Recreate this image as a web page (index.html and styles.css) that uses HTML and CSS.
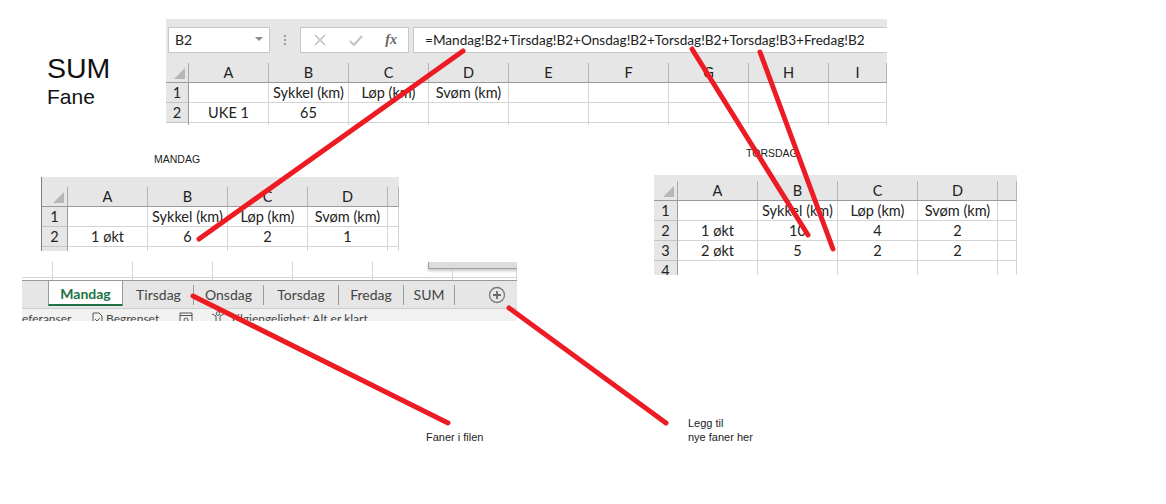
FILE: index.html
```html
<!DOCTYPE html>
<html lang="en">
<head>
    <meta charset="UTF-8">
    <title>SUM Fane</title>
    <link rel="stylesheet" href="styles.css">
</head>
<body>
<div class="canvas">

    <div class="title">SUM<small>Fane</small></div>

    <!-- SUM sheet -->
    <div class="shot shot_sum">
        <div class="formula_bar">
            <div class="name_box">B2<span class="arrow"></span></div>
            <div class="dots"></div>
            <div class="fx_box">
                <svg width="12" height="12" viewBox="0 0 12 12"><path d="M1 1l10 10M11 1L1 11" stroke="#c2c2c2" stroke-width="1.6" fill="none"/></svg>
                <svg width="14" height="12" viewBox="0 0 14 12"><path d="M1 7l4 4 8-9" stroke="#c2c2c2" stroke-width="2" fill="none"/></svg>
                <span class="fx">fx</span>
            </div>
            <div class="formula">=Mandag!B2+Tirsdag!B2+Onsdag!B2+Torsdag!B2+Torsdag!B3+Fredag!B2</div>
        </div>
        <div class="sheet sheet_sum">
            <div class="corner"></div><div class="ch">A</div><div class="ch">B</div><div class="ch">C</div><div class="ch">D</div><div class="ch">E</div><div class="ch">F</div><div class="ch">G</div><div class="ch">H</div><div class="ch">I</div>
            <div class="rh">1</div><div class="c"></div><div class="c">Sykkel (km)</div><div class="c">Løp (km)</div><div class="c">Svøm (km)</div><div class="c"></div><div class="c"></div><div class="c"></div><div class="c"></div><div class="c"></div>
            <div class="rh">2</div><div class="c">UKE 1</div><div class="c">65</div><div class="c"></div><div class="c"></div><div class="c"></div><div class="c"></div><div class="c"></div><div class="c"></div><div class="c"></div>
            <div class="rh end"></div><div class="c end"></div><div class="c end"></div><div class="c end"></div><div class="c end"></div><div class="c end"></div><div class="c end"></div><div class="c end"></div><div class="c end"></div><div class="c end"></div>
        </div>
    </div>

    <div class="label label_mandag">MANDAG</div>

    <!-- Mandag sheet -->
    <div class="shot shot_mandag">
        <div class="sheet sheet_mandag">
            <div class="corner"></div><div class="ch">A</div><div class="ch">B</div><div class="ch">C</div><div class="ch">D</div><div class="ch"></div>
            <div class="rh">1</div><div class="c"></div><div class="c">Sykkel (km)</div><div class="c">Løp (km)</div><div class="c">Svøm (km)</div><div class="c"></div>
            <div class="rh">2</div><div class="c">1 økt</div><div class="c">6</div><div class="c">2</div><div class="c">1</div><div class="c"></div>
            <div class="rh end"></div><div class="c end"></div><div class="c end"></div><div class="c end"></div><div class="c end"></div><div class="c end"></div>
        </div>
    </div>

    <div class="label label_torsdag">TORSDAG</div>

    <!-- Torsdag sheet -->
    <div class="shot shot_torsdag">
        <div class="sheet sheet_torsdag">
            <div class="corner"></div><div class="ch">A</div><div class="ch">B</div><div class="ch">C</div><div class="ch">D</div><div class="ch"></div>
            <div class="rh">1</div><div class="c"></div><div class="c">Sykkel (km)</div><div class="c">Løp (km)</div><div class="c">Svøm (km)</div><div class="c"></div>
            <div class="rh">2</div><div class="c">1 økt</div><div class="c">10</div><div class="c">4</div><div class="c">2</div><div class="c"></div>
            <div class="rh">3</div><div class="c">2 økt</div><div class="c">5</div><div class="c">2</div><div class="c">2</div><div class="c"></div>
            <div class="rh end">4</div><div class="c end"></div><div class="c end"></div><div class="c end"></div><div class="c end"></div><div class="c end"></div>
        </div>
    </div>

    <!-- tabs -->
    <div class="shot shot_tabs">
        <div class="tab_grid">
            <div class="g"></div><div class="g"></div><div class="g"></div><div class="g"></div><div class="g"></div><div class="g"></div><div class="g"></div>
            <div class="g end"></div><div class="g end"></div><div class="g end"></div><div class="g end"></div><div class="g end"></div><div class="g end"></div><div class="g end"></div>
        </div>
        <div class="dialog_edge"></div>
        <div class="tabs">
            <div class="tab active">Mandag</div>
            <div class="tab t_tirsdag">Tirsdag</div>
            <div class="tab t_onsdag">Onsdag</div>
            <div class="tab t_torsdag">Torsdag</div>
            <div class="tab t_fredag">Fredag</div>
            <div class="tab t_sum">SUM</div>
            <svg class="plus" width="18" height="18" viewBox="0 0 18 18"><circle cx="9" cy="9" r="7.5" fill="none" stroke="#7a7a7a" stroke-width="1.3"/><path d="M5 9h8M9 5v8" stroke="#6a6a6a" stroke-width="1.8"/></svg>
        </div>
        <div class="status">
            <span class="s_ref">eferanser</span>
            <svg class="s_icon" width="13" height="12" viewBox="0 0 13 12"><path d="M2 11V1h6l3 3v7" fill="none" stroke="#555" stroke-width="1"/><path d="M4 7l2 2 3-3" fill="none" stroke="#555" stroke-width="1"/></svg>
            <span class="s_beg">Begrenset</span>
            <svg class="s_icon2" width="14" height="12" viewBox="0 0 14 12"><path d="M1 1h12v10H1zM1 3.5h12" fill="none" stroke="#555" stroke-width="1"/><circle cx="7" cy="8" r="2" fill="none" stroke="#555"/></svg>
            <svg class="s_icon3" width="15" height="12" viewBox="0 0 15 12"><circle cx="7" cy="2.5" r="1.8" fill="none" stroke="#555"/><path d="M1 3l4 2v7M13 3L9 5v7" fill="none" stroke="#555"/></svg>
            <span class="s_access">Tilgjengelighet: Alt er klart</span>
        </div>
    </div>

    <div class="label label_faner">Faner i filen</div>
    <div class="label label_legg">Legg til<br>nye faner her</div>

    <!-- red arrows drawn on top -->
    <svg class="marks" width="1166" height="504" viewBox="0 0 1166 504">
        <g stroke="#ed1c24" stroke-width="5" stroke-linecap="round" fill="none">
            <path d="M463 51L199 239"/>
            <path d="M692 49L808 235"/>
            <path d="M760 52L833 249"/>
            <path d="M193 296L448 423"/>
            <path d="M509 308L666 423"/>
        </g>
    </svg>
</div>
</body>
</html>
```

FILE: styles.css
```css
* {
    margin: 0;
    padding: 0;
    box-sizing: border-box;
}

body {
    background-color: white;
    font-family: "Liberation Sans", Arial, sans-serif;
}

.canvas {
    position: relative;
    width: 1166px;
    height: 504px;
    overflow: hidden;
}

.title {
    position: absolute;
    left: 47px;
    top: 51px;
    font-size: 28.5px;
    line-height: 34px;
    color: #111;
}
.title small {
    display: block;
    font-size: 21px;
    line-height: 24px;
}

.label {
    position: absolute;
    font-size: 11px;
    line-height: 14px;
    color: #222;
}
.label_mandag { left: 154px; top: 152px; font-size: 10.5px; }
.label_torsdag { left: 746px; top: 146px; font-size: 10.5px; }
.label_faner { left: 426px; top: 430px; }
.label_legg { left: 688px; top: 416px; }

.shot {
    position: absolute;
    overflow: hidden;
    background-color: white;
    font-family: Lato, "Open Sans", sans-serif;
    color: #222;
}
.shot_sum { left: 166px; top: 19px; width: 721px; height: 106px; }
.shot_mandag { left: 41px; top: 177px; width: 358px; height: 74px; border-left: 1px solid #7f7f7f; }
.shot_torsdag { left: 654px; top: 175px; width: 363px; height: 100px; }
.shot_tabs { left: 22px; top: 262px; width: 495px; height: 59px; }

/* formula bar */
.formula_bar {
    display: flex;
    height: 44px;
    padding: 8px 0 10px 2px;
    background-color: #e6e6e6;
}
.name_box, .fx_box, .formula {
    background-color: white;
    border: 1px solid #c8c8c8;
    font-size: 14px;
    line-height: 24px;
}
.name_box {
    position: relative;
    width: 102px;
    padding-left: 6px;
}
.arrow {
    position: absolute;
    right: 6px;
    top: 9px;
    border-left: 4px solid transparent;
    border-right: 4px solid transparent;
    border-top: 4px solid #8a8a8a;
}
.dots {
    width: 30px;
    margin: 7px 0;
    background: radial-gradient(circle, #9c9c9c 1px, transparent 1.2px) center top / 2px 4px repeat-y;
}
.fx_box {
    display: flex;
    align-items: center;
    justify-content: space-between;
    width: 109px;
    padding: 0 11px 0 13px;
    margin-right: 4px;
}
.fx {
    font-family: "Liberation Serif", serif;
    font-style: italic;
    font-weight: bold;
    font-size: 14px;
    color: #666;
}
.formula {
    flex: 1;
    padding-left: 11px;
    white-space: nowrap;
    border-right: none;
    font-size: 13.6px;
}

/* sheets */
.sheet {
    display: grid;
    background-color: white;
    font-size: 14.5px;
}
.sheet_sum {
    grid-template-columns: 23px repeat(8, 80px) 58px;
    grid-template-rows: 20px 20px 20px 2px;
}
.sheet_mandag {
    padding-top: 10px;
    background: linear-gradient(#e6e6e6 10px, white 10px);
    grid-template-columns: 26px repeat(4, 80px) 11px;
    grid-template-rows: 20px 20px 20px 4px;
}
.sheet_torsdag {
    padding-top: 6px;
    background: linear-gradient(#e6e6e6 6px, white 6px);
    grid-template-columns: 24px repeat(4, 80px) 19px;
    grid-template-rows: repeat(5, 20px);
}

.corner, .ch, .rh {
    background-color: #e6e6e6;
}
.corner {
    position: relative;
    border-right: 1px solid #a8a8a8;
    border-bottom: 1px solid #9a9a9a;
}
.corner::after {
    content: "";
    position: absolute;
    right: 3px;
    bottom: 3px;
    width: 11px;
    height: 11px;
    background-color: #b6b6b6;
    clip-path: polygon(100% 0, 100% 100%, 0 100%);
}
.ch, .rh, .c {
    display: flex;
    align-items: center;
    justify-content: center;
    white-space: nowrap;
    line-height: 18px;
}
.ch {
    border-right: 1px solid #b4b4b4;
    border-bottom: 1px solid #9a9a9a;
}
.rh {
    border-right: 1px solid #9a9a9a;
    border-bottom: 1px solid #c4c4c4;
}
.c {
    border-right: 1px solid #d4d4d4;
    border-bottom: 1px solid #d4d4d4;
}
.rh.end { border-bottom: none; }
.c.end { border-bottom: none; }
.sheet_sum .rh.end { background-color: white; }

/* tabs */
.tab_grid {
    display: grid;
    grid-template-columns: 31px repeat(5, 80px) 64px;
    grid-template-rows: 16px 2px;
    height: 18px;
}
.g {
    border-right: 1px solid #d4d4d4;
    border-bottom: 1px solid #d4d4d4;
}
.g.end { border-bottom: none; }

.dialog_edge {
    position: absolute;
    left: 406px;
    top: 0;
    width: 89px;
    height: 7px;
    background-color: #dcdcdc;
    border-bottom: 1px solid #a0a0a0;
    border-left: 1px solid #a0a0a0;
    box-shadow: 0 2px 3px #c8c8c8;
}

.tabs {
    display: flex;
    align-items: center;
    height: 29px;
    padding-left: 26px;
    background-color: #e6e6e6;
    border-top: 1px solid #9a9a9a;
    border-bottom: 1px solid #cfcfcf;
    font-size: 14px;
    color: #444;
}
.tab {
    height: 20px;
    line-height: 20px;
    text-align: center;
    border-right: 1px solid #9a9a9a;
}
.tab.active {
    align-self: flex-start;
    width: 75px;
    height: 25px;
    line-height: 26px;
    margin-right: 1px;
    background-color: white;
    border-left: 1px solid #9a9a9a;
    border-right: 1px solid #9a9a9a;
    border-bottom: 2px solid #217346;
    color: #217346;
    font-weight: bold;
}
.t_tirsdag { width: 70px; }
.t_onsdag { width: 70px; }
.t_torsdag { width: 75px; }
.t_fredag { width: 65px; }
.t_sum { width: 51px; }
.plus { margin-left: 33px; }

.status {
    display: flex;
    align-items: flex-start;
    height: 13px;
    overflow: hidden;
    background-color: #f1f1f1;
    font-size: 12px;
    line-height: 19px;
    color: #444;
}
.s_ref { width: 69px; }
.s_icon { margin: 3px 2px 0 0; }
.s_beg { width: 73px; }
.s_icon2 { margin: 3px 18px 0 0; }
.s_icon3 { margin: 2px 4px 0 0; }

.marks {
    position: absolute;
    left: 0;
    top: 0;
}
```
